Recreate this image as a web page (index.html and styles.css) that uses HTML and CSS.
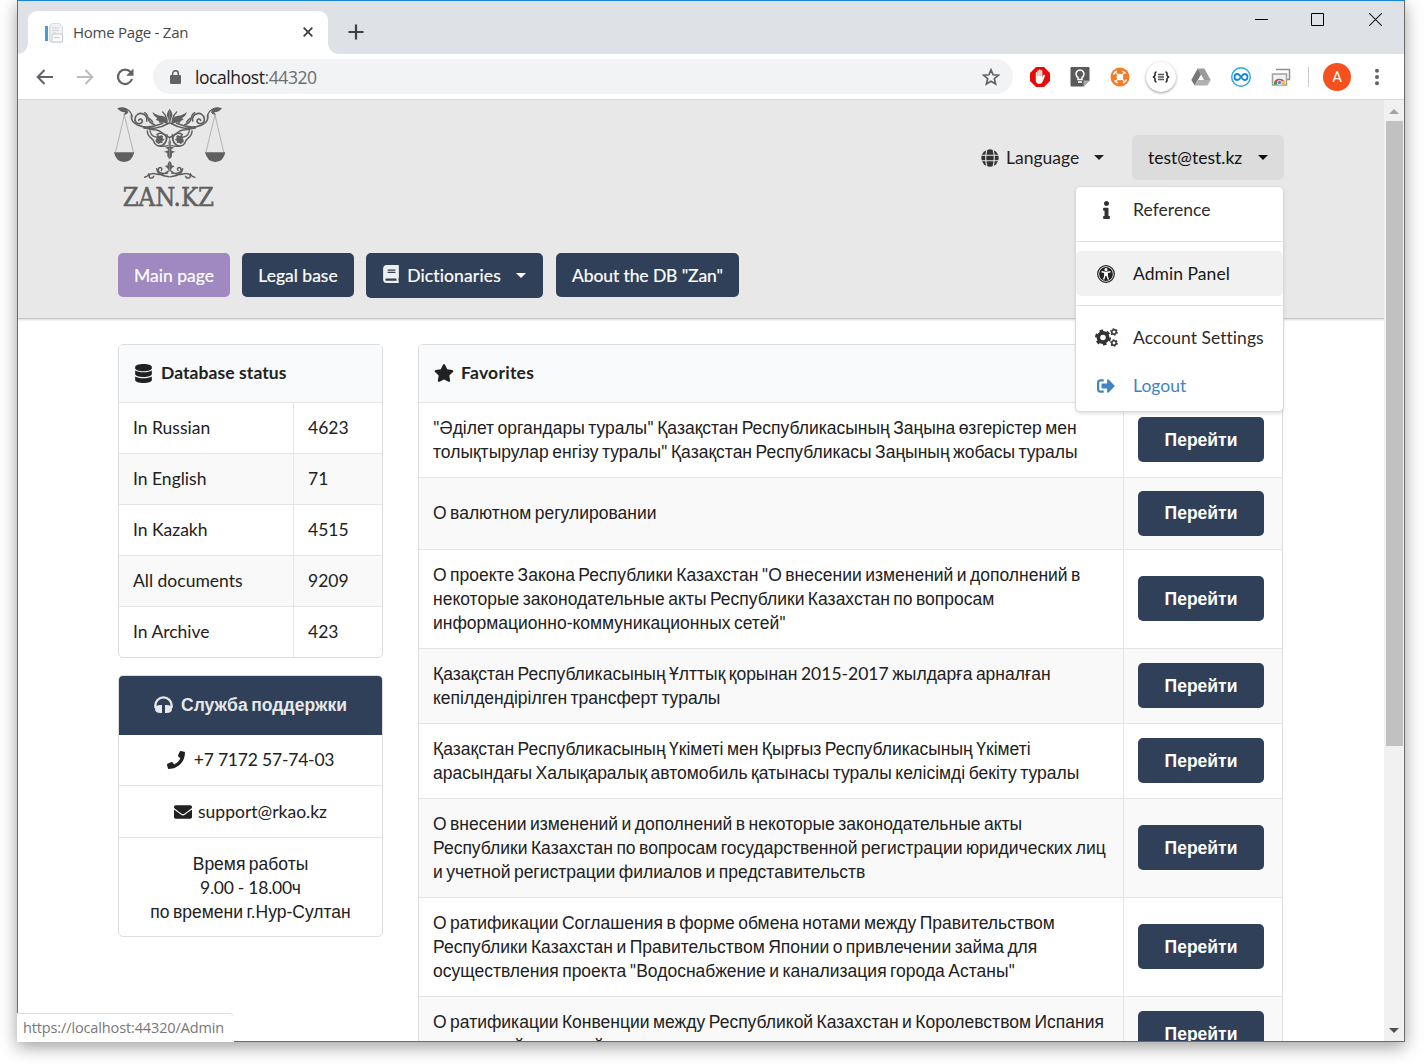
FILE: index.html
```html
<!DOCTYPE html>
<html lang="en">
<head>
<meta charset="utf-8">
<title>Home Page - Zan</title>
<link rel="stylesheet" href="styles.css">
</head>
<body>
<div class="window">
  <div class="tabstrip">
    <div class="tab">
      <svg class="favicon" width="20" height="20" viewBox="0 0 20 20"><path d="M8 .5h7.500l3 3V19H6V2z" fill="#f0f1f3" stroke="#d2d4d8" stroke-width=".8"/><path d="M1 3h3v15H1z" fill="#4a9bd3"/><path d="M5 3h1v15H5z" fill="#cfe0ee"/><path d="M8 5h7M8 7.500h7M8 10h4" stroke="#d0d3d7"/><path d="M9 11h9.500v8H8v-6z" fill="#fafafa" stroke="#c7c9ce"/><path d="M10 14.500h6" stroke="#c7c9ce"/></svg>
      <span class="tab-title">Home Page - Zan</span>
      <svg class="tab-close" width="10" height="10" viewBox="0 0 10 10"><path d="M.7.7l8.600 8.600M9.300.7L.7 9.300" stroke="#3c4043" stroke-width="1.800"/></svg>
    </div>
    <svg class="new-tab" width="16" height="16" viewBox="0 0 16 16"><path d="M8 .5v15M.5 8h15" stroke="#3c4043" stroke-width="2.200"/></svg>
    <div class="controls">
      <svg width="13" height="13" viewBox="0 0 13 13"><path d="M0 6.500h13" stroke="#000"/></svg>
      <svg width="13" height="13" viewBox="0 0 13 13"><path d="M.5.5h12v12H.5z" fill="none" stroke="#000"/></svg>
      <svg width="13" height="13" viewBox="0 0 13 13"><path d="M0 0l13 13M13 0L0 13" stroke="#222" stroke-width="1.100"/></svg>
    </div>
  </div>
  <div class="toolbar">
    <svg class="nav-back" width="18" height="16" viewBox="0 0 18 16"><path d="M17 8H2M8.500 1L1.700 8l6.800 7" fill="none" stroke="#5f6368" stroke-width="2"/></svg>
    <svg class="nav-fwd" width="18" height="16" viewBox="0 0 18 16"><path d="M1 8h15M9.500 1l6.800 7-6.800 7" fill="none" stroke="#bbbdc0" stroke-width="2"/></svg>
    <svg class="nav-reload" width="18" height="18" viewBox="0 0 18 18"><path d="M14.700 4.200A7.200 7.200 0 1 0 16 11" fill="none" stroke="#5f6368" stroke-width="2.200"/><path d="M17.500.5v7.300h-7.300z" fill="#5f6368"/></svg>
    <div class="omnibox">
      <svg width="11" height="14" viewBox="0 0 11 14"><path d="M2.700 6V3.500a2.800 2.800 0 0 1 5.600 0V6" fill="none" stroke="#5f6368" stroke-width="1.500"/><rect y="5" width="11" height="9" rx="1.200" fill="#5f6368"/></svg>
      <span class="url">localhost<span class="port">:44320</span></span>
      <svg class="bookmark" width="18" height="18" viewBox="0 0 18 18"><path d="M9 1.800l2.100 5 5.300.4-4.100 3.500 1.300 5.300L9 13.200 4.400 16l1.300-5.300-4.100-3.500 5.300-.4z" fill="none" stroke="#5f6368" stroke-width="1.700"/></svg>
    </div>
    <div class="extensions">
      <svg width="20" height="20" viewBox="0 0 20 20"><path d="M6 0h8l6 6v8l-6 6H6l-6-6V6z" fill="#e60c0c"/><path d="M5.800 11V5.800c0-1 1.500-1 1.500 0V4c0-1 1.600-1 1.600 0v-.7c0-1 1.700-1 1.700 0V4c0-1 1.700-1 1.700 0v6l1-1.700c.7-1 2-.4 1.600.6l-2.200 5.500c-1.200 3.500-6.900 3-6.900-1z" fill="#fff"/><path d="M7.400 4.500V9M9.100 4v5M10.800 4v5" stroke="#e60c0c" stroke-width=".4"/></svg>
      <svg width="20" height="20" viewBox="0 0 20 20"><path d="M1.500 0h17q1 0 1 1v12.500l-6 6h-12q-1 0-1-1V1q0-1 1-1z" fill="#5a5a5a"/><path d="M19.500 13.500l-6 6v-6z" fill="#aaa"/><path d="M8 12.500v-2a4 4 0 1 1 4 0v2z" fill="none" stroke="#fff" stroke-width="1.500"/><path d="M8 15h4" stroke="#fff" stroke-width="1.600"/></svg>
      <svg width="20" height="20" viewBox="0 0 20 20"><circle cx="10" cy="10" r="9.500" fill="#f57c26"/><circle cx="10" cy="10" r="3.300" fill="#fff"/><path d="M6 6l8 8M14 6l-8 8" stroke="#fff" stroke-width="1.200"/><path d="M3.500 7.500q1-2.500 3.500-3.500M13 16q2.500-1 3.500-3.500M12.500 4l3 2.500M4.500 13.500l3 2.500" fill="none" stroke="#fff" stroke-width="1.600"/></svg>
      <span class="json-badge"><svg width="18" height="14" viewBox="0 0 18 14"><path d="M4.500 2Q3 2 3 3.500v2L1.500 7 3 8.500v2Q3 12 4.500 12M13.500 2Q15 2 15 3.500v2L16.500 7 15 8.500v2q0 1.500-1.500 1.500" fill="none" stroke="#222" stroke-width="1.500"/><path d="M6 4.500h6M6 7h6M6 9.500h6" stroke="#555" stroke-width="1.500"/></svg></span>
      <svg width="20" height="20" viewBox="0 0 20 20"><path d="M6.700 1.500h6.600L19.700 13H13L6.700 1.500z" fill="#9b9b9b"/><path d="M6.700 1.500L10 7.500 3.700 18.500.3 13z" fill="#777"/><path d="M7 13h12.700l-3.300 5.500H3.700z" fill="#b0b0b0"/></svg>
      <svg width="20" height="20" viewBox="0 0 20 20"><circle cx="10" cy="10" r="9.300" fill="#fff" stroke="#27a9e8" stroke-width="1.400"/><path d="M10 10C8.500 7.800 7.800 7 6.500 7a3 3 0 0 0 0 6c1.300 0 2-.8 3.500-3s2.200-3 3.500-3a3 3 0 0 1 0 6c-1.300 0-2-.8-3.500-3z" fill="none" stroke="#1585d8" stroke-width="1.800"/></svg>
      <svg width="20" height="20" viewBox="0 0 20 20"><path d="M5 2.500h13.500v10H16" fill="none" stroke="#909090" stroke-width="1.500"/><path d="M1.500 7h14v11h-14z" fill="#f2f2f2" stroke="#a0a0a0" stroke-width="1.500"/><path d="M3 17.200a5.500 5.500 0 0 1 10.800-1.500L8.500 16z" fill="#e34133"/><path d="M3 17.500a5.500 5.500 0 0 1 1-4l3 4z" fill="#2ba24c"/><path d="M10 14h3.300q1 2 .5 3.500H9z" fill="#fbc116"/><circle cx="8.500" cy="15.600" r="2.200" fill="#4587f4" stroke="#fff" stroke-width=".8"/></svg>
    </div>
    <span class="divider"></span>
    <span class="avatar">A</span>
    <svg class="kebab" width="6" height="18" viewBox="0 0 6 18"><g fill="#5f6368"><circle cx="3" cy="2.800" r="2"/><circle cx="3" cy="9" r="2"/><circle cx="3" cy="15.200" r="2"/></g></svg>
  </div>

  <div class="viewport">
    <div class="page">
      <header class="header">
        <div class="header-top">
          <svg class="logo" width="112" height="106" viewBox="42 33 336 318">
            <defs>
              <g id="half" fill="none" stroke="#606060" stroke-linecap="round">
                <path d="M52 40q16-7 28 1l5 11q-4 9-15 8l6-8q-14 1-24-12z" fill="#606060" stroke="none"/>
                <path d="M76 41q16 5 20 23" stroke-width="4"/>
                <path d="M95 60c-4 22 12 30 33 35q28 4 60-10" stroke-width="5"/>
                <path d="M140 78c6-25-31-32-35-7-2 16 20 20 22 8 0-8-9-9-11-3" stroke-width="5"/>
                <path d="M134 53q8 4 10 16 4 16 20 20M142 67q10 4 16 14" stroke-width="4.500"/>
                <path d="M157 50q12 11 27 12 14 2 19 14l1 13q-12-9-25-5-3-9-12-9l5-6q-11-5-15-19z" fill="#606060" stroke="none"/>
                <path d="M209 41q-14 17-5 28 2 8 5 20z" fill="#606060" stroke="none"/>
                <path d="M188 51q8 7 13 22" stroke-width="4"/>
                <path d="M132 97l32 3q22-3 43-16M132 99l30 5q16 0 27 12l20 12" stroke-width="4.500"/>
                <path d="M142 108c0 22 18 18 22 37 8 12 28 10 34-6 6-17-12-32-27-20" stroke-width="4.500"/>
                <path d="M167 135l3-6-4-4q6 1 7-6l6 4q6-5 10 1l-1 6 6 4-7 4 1 7-7-2-6 5q-3-6-8-6z" fill="#606060" stroke="none"/>
                <path d="M150 103q0 20 17 23M178 153q13 2 26-1M191 147q12-10 10-28" stroke-width="4"/>
                <path d="M209 128q-5 10-3 27l-12 3q12 3 11 8l-14 5q14 1 11 10-1 7 7 12z" fill="#606060" stroke="none"/>
                <path d="M209 197q-8 7-6 14l-9 2q10 5 15 17z" fill="#606060" stroke="none"/>
                <path d="M203 234c-16 4-33-2-27-14 5-6 13 0 8 6M170 221q2 22 37 24M205 228c-25 23-44-2-57 12-4 9 9 13 13 4M147 236q-2 8-13 11" stroke-width="4.500"/>
                <path d="M73 60L47 171M73 60l27 111" stroke="#999" stroke-width="2"/>
                <path d="M42 172h61q-7 29-31 29t-30-29z" fill="#606060" stroke="none"/>
              </g>
            </defs>
            <use href="#half"/><use href="#half" transform="matrix(-1 0 0 1 418 0)"/>
            <text class="logo-text" x="68" y="333" textLength="274" lengthAdjust="spacingAndGlyphs">ZAN.KZ</text>
          </svg>
          <div class="user-tools">
            <div class="language">
              <svg width="18" height="18" viewBox="0 0 18 18"><circle cx="9" cy="9" r="8.700" fill="#333"/><path d="M0 6.200h18M0 11.800h18M6 0Q3.500 9 6 18M12 0q2.500 9 0 18" fill="none" stroke="#e8e8e8" stroke-width="1.100"/></svg>
              <span class="language-label">Language</span><i class="caret"></i>
            </div>
            <div class="user">
              <span class="user-label">test@test.kz</span><i class="caret"></i>
              <div class="menu">
                <div class="menu-item"><span class="menu-icon"><svg width="7" height="18" viewBox="0 0 192 512"><path d="M20 424.229h20V279.771H20c-11.046 0-20-8.954-20-20V212c0-11.046 8.954-20 20-20h112c11.046 0 20 8.954 20 20v212.229h20c11.046 0 20 8.954 20 20V492c0 11.046-8.954 20-20 20H20c-11.046 0-20-8.954-20-20v-47.771c0-11.046 8.954-20 20-20zM96 0C56.235 0 24 32.235 24 72s32.235 72 72 72 72-32.235 72-72S135.764 0 96 0z"/></svg></span>Reference</div>
                <div class="menu-group"><div class="menu-item active"><span class="menu-icon"><svg width="18" height="18" viewBox="0 0 18 18"><circle cx="9" cy="9" r="8.300" fill="none" stroke="#222" stroke-width="1.200"/><circle cx="9" cy="9" r="6.900" fill="#222"/><circle cx="9" cy="4.500" r="1.500" fill="#fff"/><path d="M4.500 6.700L9 7.500l4.500-.8M9 7.500V11M7.800 7.500V11l-1.200 3.500M10.200 7.500V11l1.200 3.500" fill="none" stroke="#fff" stroke-width="1.400"/></svg></span>Admin Panel</div></div>
                <div class="menu-item settings"><span class="menu-icon"><svg width="23" height="19" viewBox="0 0 23 19"><g fill="none" stroke="#333"><circle cx="8" cy="9.500" r="4.600" stroke-width="3.600"/><circle cx="8" cy="9.500" r="6.900" stroke-width="2.200" stroke-dasharray="3.610 3.610"/><circle cx="19" cy="4" r="2.200" stroke-width="1.500"/><circle cx="19" cy="4" r="3.200" stroke-width="1.200" stroke-dasharray="1.670 1.680"/><circle cx="19" cy="15" r="2.200" stroke-width="1.500"/><circle cx="19" cy="15" r="3.200" stroke-width="1.200" stroke-dasharray="1.670 1.680"/></g></svg></span>Account Settings</div>
                <div class="menu-item logout"><span class="menu-icon"><svg width="18" height="18" viewBox="0 0 512 512"><path d="M497 273L329 441c-15 15-41 4.500-41-17v-96H152c-13.300 0-24-10.700-24-24v-96c0-13.300 10.700-24 24-24h136V88c0-21.400 25.900-32 41-17l168 168c9.300 9.400 9.300 24.600 0 34zM192 436v-40c0-6.600-5.400-12-12-12H96c-17.700 0-32-14.300-32-32V160c0-17.700 14.300-32 32-32h84c6.600 0 12-5.400 12-12V76c0-6.600-5.400-12-12-12H96c-53 0-96 43-96 96v192c0 53 43 96 96 96h84c6.600 0 12-5.400 12-12z"/></svg></span>Logout</div>
              </div>
            </div>
          </div>
        </div>
        <nav class="nav">
          <a class="btn btn-main">Main page</a>
          <a class="btn btn-legal">Legal base</a>
          <a class="btn btn-dict"><svg width="16" height="18" viewBox="0 0 448 512"><path fill="#eceef0" d="M448 360V24c0-13.300-10.700-24-24-24H96C43 0 0 43 0 96v320c0 53 43 96 96 96h328c13.300 0 24-10.700 24-24v-16c0-7.500-3.500-14.300-8.900-18.700-4.200-15.400-4.200-59.300 0-74.700 5.400-4.300 8.900-11.100 8.900-18.600zM128 134c0-3.300 2.700-6 6-6h212c3.300 0 6 2.700 6 6v20c0 3.300-2.700 6-6 6H134c-3.300 0-6-2.700-6-6v-20zm0 64c0-3.300 2.700-6 6-6h212c3.300 0 6 2.700 6 6v20c0 3.300-2.700 6-6 6H134c-3.300 0-6-2.700-6-6v-20zm253.400 250H96c-17.700 0-32-14.300-32-32 0-17.600 14.400-32 32-32h285.400c-1.900 17.100-1.900 46.900 0 64z"/></svg><span>Dictionaries</span><i class="caret"></i></a>
          <a class="btn btn-about">About the DB "Zan"</a>
        </nav>
      </header>

      <main class="content">
        <aside class="sidebar">
          <section class="card">
            <h3 class="card-head"><svg width="17" height="19" viewBox="0 0 448 512"><path d="M448 73.143v45.714C448 159.143 347.667 192 224 192S0 159.143 0 118.857V73.143C0 32.857 100.333 0 224 0s224 32.857 224 73.143zM448 176v102.857C448 319.143 347.667 352 224 352S0 319.143 0 278.857V176c48.125 33.143 136.208 48.572 224 48.572S399.874 209.143 448 176zm0 160v102.857C448 479.143 347.667 512 224 512S0 479.143 0 438.857V336c48.125 33.143 136.208 48.572 224 48.572S399.874 369.143 448 336z"/></svg>Database status</h3>
            <div class="stat"><span>In Russian</span><b>4623</b></div>
            <div class="stat"><span>In English</span><b>71</b></div>
            <div class="stat"><span>In Kazakh</span><b>4515</b></div>
            <div class="stat"><span>All documents</span><b>9209</b></div>
            <div class="stat"><span>In Archive</span><b>423</b></div>
          </section>
          <section class="card support">
            <h3 class="support-head"><svg width="19" height="18" viewBox="0 0 19 18"><path d="M1.400 12V9.500a8.100 8.100 0 0 1 16.200 0V12" fill="none" stroke="#e6e8ea" stroke-width="2.400"/><path d="M8 9v8H6.500Q1 17 1 13t5.500-4zM11 9v8h1.500q5.500 0 5.500-4t-5.500-4z" fill="#e6e8ea"/></svg><span class="cyr">Служба поддержки</span></h3>
            <div class="phone"><svg width="18" height="18" viewBox="0 0 512 512"><path d="M493.400 24.600l-104-24c-11.300-2.600-22.900 3.300-27.500 13.900l-48 112c-4.200 9.800-1.400 21.300 6.900 28l60.600 49.600c-36 76.700-98.900 140.500-177.200 177.200l-49.600-60.600c-6.800-8.300-18.200-11.100-28-6.900l-112 48C3.900 366.500-2 378.100.6 389.400l24 104C27.100 504.200 36.700 512 48 512c256.100 0 464-207.500 464-464 0-11.200-7.700-20.900-18.600-23.400z"/></svg>+7 7172 57-74-03</div>
            <div class="mail"><svg width="18" height="18" viewBox="0 0 512 512"><path d="M502.300 190.800c3.900-3.100 9.700-.2 9.700 4.700V400c0 26.500-21.500 48-48 48H48c-26.500 0-48-21.500-48-48V195.600c0-5 5.700-7.800 9.700-4.700 22.400 17.400 52.100 39.500 154.100 113.600 21.100 15.400 56.700 47.800 92.200 47.600 35.700.3 72-32.800 92.300-47.600 102-74.100 131.600-96.300 154-113.700zM256 320c23.200.4 56.600-29.200 73.400-41.400 132.700-96.300 142.800-104.700 173.400-128.700 5.800-4.500 9.200-11.500 9.200-18.900v-19c0-26.500-21.500-48-48-48H48c-26.500 0-48 21.500-48 48v19c0 7.400 3.400 14.300 9.200 18.900 30.600 23.900 40.700 32.400 173.400 128.700 16.800 12.200 50.200 41.800 73.400 41.400z"/></svg>support@rkao.kz</div>
            <div class="hours cyr"><div>Время работы</div><div><span class="lat">9.00 - 18.00</span>ч</div><div>по времени г.Нур-Султан</div></div>
          </section>
        </aside>

        <section class="card favorites">
          <h3 class="card-head"><svg width="20" height="18" viewBox="0 0 576 512"><path d="M259.300 17.800L194 150.200 47.900 171.500c-26.200 3.800-36.700 36.100-17.700 54.600l105.700 103-25 145.500c-4.500 26.300 23.200 46 46.400 33.700L288 439.600l130.700 68.700c23.200 12.200 50.900-7.400 46.400-33.700l-25-145.500 105.700-103c19-18.500 8.500-50.800-17.700-54.600L382 150.200 316.700 17.800c-11.700-23.600-45.600-23.900-57.400 0z"/></svg>Favorites</h3>
          <div class="fav two"><p class="cyr"><span class="lat">"</span>Әділет органдары туралы<span class="lat">"</span> Қазақстан Республикасының Заңына өзгерістер мен<br>толықтырулар енгізу туралы<span class="lat">"</span> Қазақстан Республикасы Заңының жобасы туралы</p><div class="go"><a class="btn cyr">Перейти</a></div></div>
          <div class="fav one"><p class="cyr">О валютном регулировании</p><div class="go"><a class="btn cyr">Перейти</a></div></div>
          <div class="fav three"><p class="cyr">О проекте Закона Республики Казахстан <span class="lat">"</span>О внесении изменений и дополнений в<br>некоторые законодательные акты Республики Казахстан по вопросам<br>информационно-коммуникационных сетей<span class="lat">"</span></p><div class="go"><a class="btn cyr">Перейти</a></div></div>
          <div class="fav two"><p class="cyr">Қазақстан Республикасының Ұлттық қорынан <span class="lat">2015-2017</span> жылдарға арналған<br>кепілдендірілген трансферт туралы</p><div class="go"><a class="btn cyr">Перейти</a></div></div>
          <div class="fav two"><p class="cyr">Қазақстан Республикасының Үкіметі мен Қырғыз Республикасының Үкіметі<br>арасындағы Халықаралық автомобиль қатынасы туралы келісімді бекіту туралы</p><div class="go"><a class="btn cyr">Перейти</a></div></div>
          <div class="fav three"><p class="cyr">О внесении изменений и дополнений в некоторые законодательные акты<br>Республики Казахстан по вопросам государственной регистрации юридических лиц<br>и учетной регистрации филиалов и представительств</p><div class="go"><a class="btn cyr">Перейти</a></div></div>
          <div class="fav three"><p class="cyr">О ратификации Соглашения в форме обмена нотами между Правительством<br>Республики Казахстан и Правительством Японии о привлечении займа для<br>осуществления проекта <span class="lat">"</span>Водоснабжение и канализация города Астаны<span class="lat">"</span></p><div class="go"><a class="btn cyr">Перейти</a></div></div>
          <div class="fav two"><p class="cyr">О ратификации Конвенции между Республикой Казахстан и Королевством Испания<br>о взаимной правовой помощи</p><div class="go"><a class="btn cyr">Перейти</a></div></div>
        </section>
      </main>
    </div>
    <div class="scrollbar"><i class="arrow-up"></i><div class="thumb"></div><i class="arrow-down"></i></div>
  </div>
  <div class="status">https://localhost:44320/Admin</div>
</div>
</body>
</html>
```
FILE: styles.css
```css
* { box-sizing: border-box; }
body { margin: 0; width: 1426px; height: 1064px; overflow: hidden; background: #fff; font-family: Lato, "Liberation Sans", sans-serif; font-size: 17.5px; line-height: 24px; color: #212121; }
svg { display: block; flex: none; }

/* browser window */
.window { position: relative; width: 1388px; height: 1042px; margin-left: 17px; border: 1px solid #6b6b6b; border-top-color: #1883d7; background: #fff; display: flex; flex-direction: column; box-shadow: 0 5px 16px rgba(0,0,0,.38); }
.tabstrip { height: 53px; background: #dee1e6; display: flex; font-family: "Open Sans", sans-serif; }
.tab { position: relative; width: 300px; height: 43px; margin: 10px 0 0 10px; padding: 0 15px 0 16px; border-radius: 9px 9px 0 0; background: #fff; display: flex; align-items: center; }
.tab::before, .tab::after { content: ""; position: absolute; bottom: 0; width: 10px; height: 10px; }
.tab::before { left: -10px; background: radial-gradient(circle at 0 0, #dee1e6 9.500px, #fff 10px); }
.tab::after { right: -10px; background: radial-gradient(circle at 100% 0, #dee1e6 9.500px, #fff 10px); }
.tab-title { margin: -2px 0 0 9px; font-size: 15px; letter-spacing: -.25px; color: #45484c; flex: 1; }
.tab-close { margin-top: -1px; }
.new-tab { margin: 23px 0 0 20px; }
.controls { margin: 12px 22px 0 auto; display: flex; gap: 44px; }
.controls svg:nth-child(2) { margin: 0 1px 0 -1px; }
.toolbar { height: 46px; border-bottom: 1px solid #d8dadd; display: flex; align-items: center; padding: 0 24px 0 18px; }
.nav-fwd { margin-left: 22px; }
.nav-reload { margin-left: 22px; }
.omnibox { width: 860px; height: 35px; margin-left: 19px; padding: 0 13px 0 17px; border-radius: 18px; background: #f1f3f4; display: flex; align-items: center; font-family: "Open Sans", sans-serif; }
.url { margin-left: 14px; font-size: 17.500px; letter-spacing: -.42px; color: #202124; flex: 1; }
.port { color: #6a6e73; }
.extensions { display: flex; align-items: center; gap: 20.200px; margin-left: 17px; }
.json-badge { width: 30px; height: 30px; margin: 0 -5px; border-radius: 50%; background: #fff; box-shadow: 0 1px 3px rgba(0,0,0,.4); display: flex; align-items: center; justify-content: center; }
.divider { width: 1px; height: 20px; margin-left: 17px; background: #c9cbce; }
.avatar { width: 28px; height: 28px; margin-left: 14px; border-radius: 50%; background: #f4511e; color: #fff; font: 15px/28px Roboto, sans-serif; text-align: center; }
.kebab { margin-left: auto; }

.viewport { flex: 1; min-height: 0; display: flex; overflow: hidden; }
.page { width: 1366px; overflow: hidden; }
.scrollbar { width: 20px; background: #f1f1f1; display: flex; flex-direction: column; align-items: center; padding: 9px 0 8px; }
.arrow-up { border: 5px solid transparent; border-top: 0; border-bottom-color: #a3a3a3; }
.arrow-down { margin-top: auto; border: 5px solid transparent; border-bottom: 0; border-top-color: #505050; }
.thumb { width: 17px; height: 625px; margin-top: 7px; background: #c1c1c1; }
.status { position: absolute; left: -1px; bottom: -1px; width: 217px; height: 29px; padding-left: 6px; background: #fff; border: solid #ddd; border-width: 1px 0 0; border-radius: 0 5px 0 0; font: 14.500px/27px "Open Sans", sans-serif; letter-spacing: -.13px; color: #777; }

/* page header */
.header { height: 219px; background: #e8e8e8; border-bottom: 1px solid #c6c6c6; box-shadow: 0 1px 2px rgba(0,0,0,.15); padding: 6px 100px 0 96px; position: relative; }
.header-top { height: 147px; display: flex; justify-content: space-between; }
.logo-text { font: 78px "DejaVu Serif Condensed", "DejaVu Serif", serif; fill: #606060; stroke: #606060; stroke-width: 1.500px; }
.user-tools { display: flex; align-items: flex-start; padding-top: 29px; }
.language { height: 45px; display: flex; align-items: center; color: #222; }
.language-label { margin-left: 7px; width: 88px; }
.caret { border: 5px solid transparent; border-top-color: currentColor; border-bottom: 0; }
.user { position: relative; width: 152px; height: 45px; margin-left: 28px; padding: 0 16px 0 16px; border-radius: 5px; background: #dcdcdc; color: #111; display: flex; align-items: center; justify-content: space-between; }
.menu { position: absolute; z-index: 2; right: 0; top: 51px; width: 209px; height: 226px; border: 1px solid #d9dadb; border-radius: 5px; background: #fff; box-shadow: 0 2px 3px rgba(34,36,38,.12); color: #2b2b2b; fill: #333; letter-spacing: .05px; }
.menu-item { height: 45px; display: flex; align-items: center; padding-left: 18px; white-space: nowrap; }
.menu-icon { width: 24px; margin-right: 15px; display: flex; justify-content: center; }
.menu-group { margin-top: 9px; padding: 9px 0; border: solid #e2e3e4; border-width: 1px 0; }
.active { background: #f1f1f1; border-radius: 5px; color: #181818; }
.settings { margin-top: 9px; }
.logout { margin-top: 3px; color: #4183c4; fill: #4183c4; }
.nav { margin-left: 4px; display: flex; align-items: flex-start; }
.btn { height: 44px; border-radius: 5px; background: #2f4058; color: #fff; display: flex; align-items: center; justify-content: center; white-space: nowrap; }
.nav .btn { margin-right: 12px; -webkit-text-stroke: .2px #fff; }
.btn-main, .btn-legal, .btn-about { padding-top: 1px; }
.btn-main, .btn-legal { width: 112px; }
.btn-main { background: #a088c0; }
.nav .btn-dict { width: 177px; height: 45px; margin-right: 13px; }
.btn-dict svg { margin-top: -3px; }
.btn-dict span { margin: 0 15px 0 8px; letter-spacing: .15px; }
.btn-about { width: 183px; letter-spacing: -.1px; }

/* page body */
.content { display: flex; align-items: flex-start; padding: 25px 0 0 100px; }
.sidebar { width: 265px; margin-right: 35px; }
.card { border: 1px solid #dcddde; border-radius: 5px; overflow: hidden; background: #fff; fill: #212121; }
h3 { margin: 0; font-size: 17.500px; line-height: 24px; font-weight: 700; }
.card-head { height: 57px; display: flex; align-items: center; gap: 9px; padding: 0 0 1px 16px; background: #f9fafb; letter-spacing: .08px; }
.favorites .card-head { padding-left: 15px; gap: 7px; letter-spacing: .25px; }
.stat { height: 51px; border-top: 1px solid #e4e5e5; display: flex; }
.stat span { width: 175px; padding: 13px 0 0 14px; border-right: 1px solid #e4e5e5; }
.stat b { padding: 13px 0 0 14px; font-weight: 400; }
.stat:nth-child(odd), .fav:nth-child(odd) { background: #f9f9f9; }
.cyr { font-family: "Liberation Sans", Arial, sans-serif; word-spacing: -1.400px; }
.lat { font-family: Lato, sans-serif; word-spacing: 0; }
.support { height: 262px; margin-top: 17px; text-align: center; }
.support-head { height: 59px; padding-bottom: 2px; background: #2f4058; color: #e6e8ea; display: flex; align-items: center; justify-content: center; gap: 8px; }
.support-head .cyr { letter-spacing: .05px; }
.phone, .mail { height: 50px; display: flex; align-items: center; justify-content: center; gap: 9px; }
.phone { letter-spacing: -.2px; }
.mail { height: 52px; padding-top: 1px; border-top: 1px solid #e4e5e5; gap: 6px; }
.hours { border-top: 1px solid #e4e5e5; padding-top: 14px; }
.hours .lat { letter-spacing: -.25px; }
.favorites { width: 865px; }
.fav { border-top: 1px solid #e4e5e5; display: flex; }
.fav p { width: 705px; margin: 0; padding-left: 14px; border-right: 1px solid #e4e5e5; white-space: nowrap; align-self: stretch; align-content: center; }
.one { height: 72px; }
.one p { padding-bottom: 2px; }
.two { height: 75px; }
.three { height: 99px; }
.go { padding: 0 0 1px 14px; display: flex; align-items: center; }
.go .btn { width: 126px; height: 45px; font-weight: 700; }
```
